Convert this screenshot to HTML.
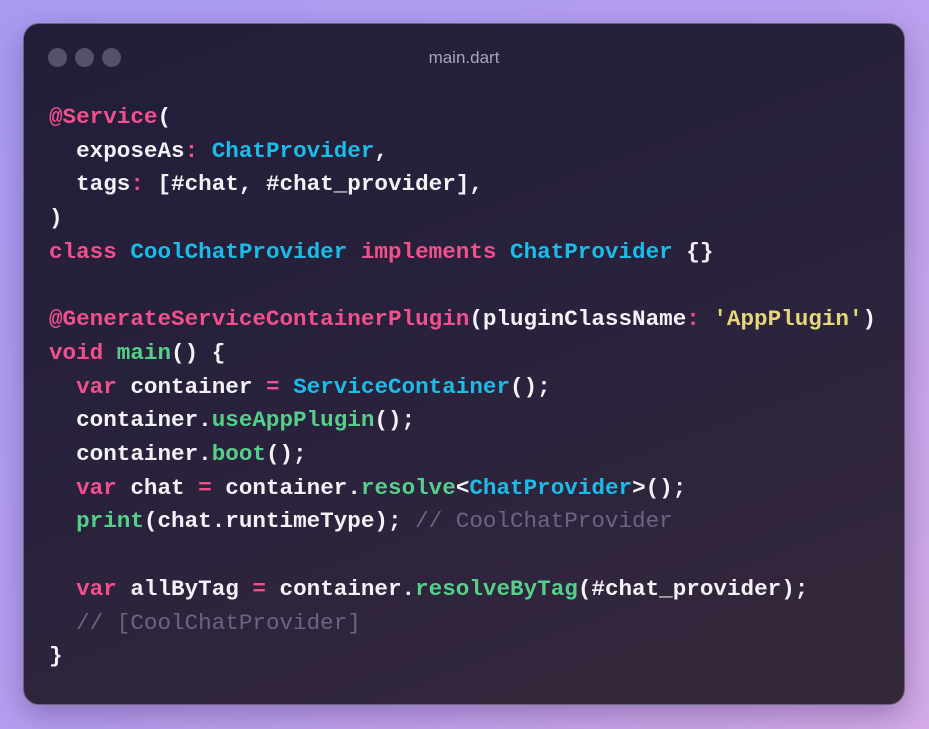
<!DOCTYPE html>
<html><head><style>
html,body{margin:0;padding:0}
body{width:929px;height:729px;overflow:hidden;background:linear-gradient(135deg,#a89bf2 0%,#b79ff0 50%,#d4abe6 100%);position:relative;font-family:"Liberation Mono",monospace}
.win{position:absolute;left:23px;top:23px;width:882px;height:682px;border-radius:16px;background:linear-gradient(160deg,#211d39 0%,#2a223c 50%,#35283b 100%);border:1px solid #6b6480;box-shadow:0 10px 30px rgba(60,30,90,.35);box-sizing:border-box}
.dot{position:absolute;top:24px;width:19px;height:19px;border-radius:50%;background:#56506a}
.title{position:absolute;top:24px;left:0;right:0;text-align:center;color:#a9a4b8;font:17px "Liberation Sans",sans-serif}
pre{position:absolute;left:25px;top:77px;margin:0;font-family:"Liberation Mono",monospace;font-size:22.6px;line-height:33.7px;color:#f4f2f6;font-weight:bold}
.k{color:#f2508c}.t{color:#1bbde8}.f{color:#55cf8a}.s{color:#e6d77a}.c{color:#6c6484;font-weight:normal}
</style></head><body>
<div class="win">
<div class="dot" style="left:24px"></div><div class="dot" style="left:51px"></div><div class="dot" style="left:78px"></div>
<div class="title">main.dart</div>
<pre><span class="k">@Service</span>(
  exposeAs<span class="k">:</span> <span class="t">ChatProvider</span>,
  tags<span class="k">:</span> [#chat, #chat_provider],
)
<span class="k">class</span> <span class="t">CoolChatProvider</span> <span class="k">implements</span> <span class="t">ChatProvider</span> {}

<span class="k">@GenerateServiceContainerPlugin</span>(pluginClassName<span class="k">:</span> <span class="s">'AppPlugin'</span>)
<span class="k">void</span> <span class="f">main</span>() {
  <span class="k">var</span> container <span class="k">=</span> <span class="t">ServiceContainer</span>();
  container.<span class="f">useAppPlugin</span>();
  container.<span class="f">boot</span>();
  <span class="k">var</span> chat <span class="k">=</span> container.<span class="f">resolve</span>&lt;<span class="t">ChatProvider</span>&gt;();
  <span class="f">print</span>(chat.runtimeType); <span class="c">// CoolChatProvider</span>

  <span class="k">var</span> allByTag <span class="k">=</span> container.<span class="f">resolveByTag</span>(#chat_provider);
  <span class="c">// [CoolChatProvider]</span>
}</pre>
</div>
</body></html>
